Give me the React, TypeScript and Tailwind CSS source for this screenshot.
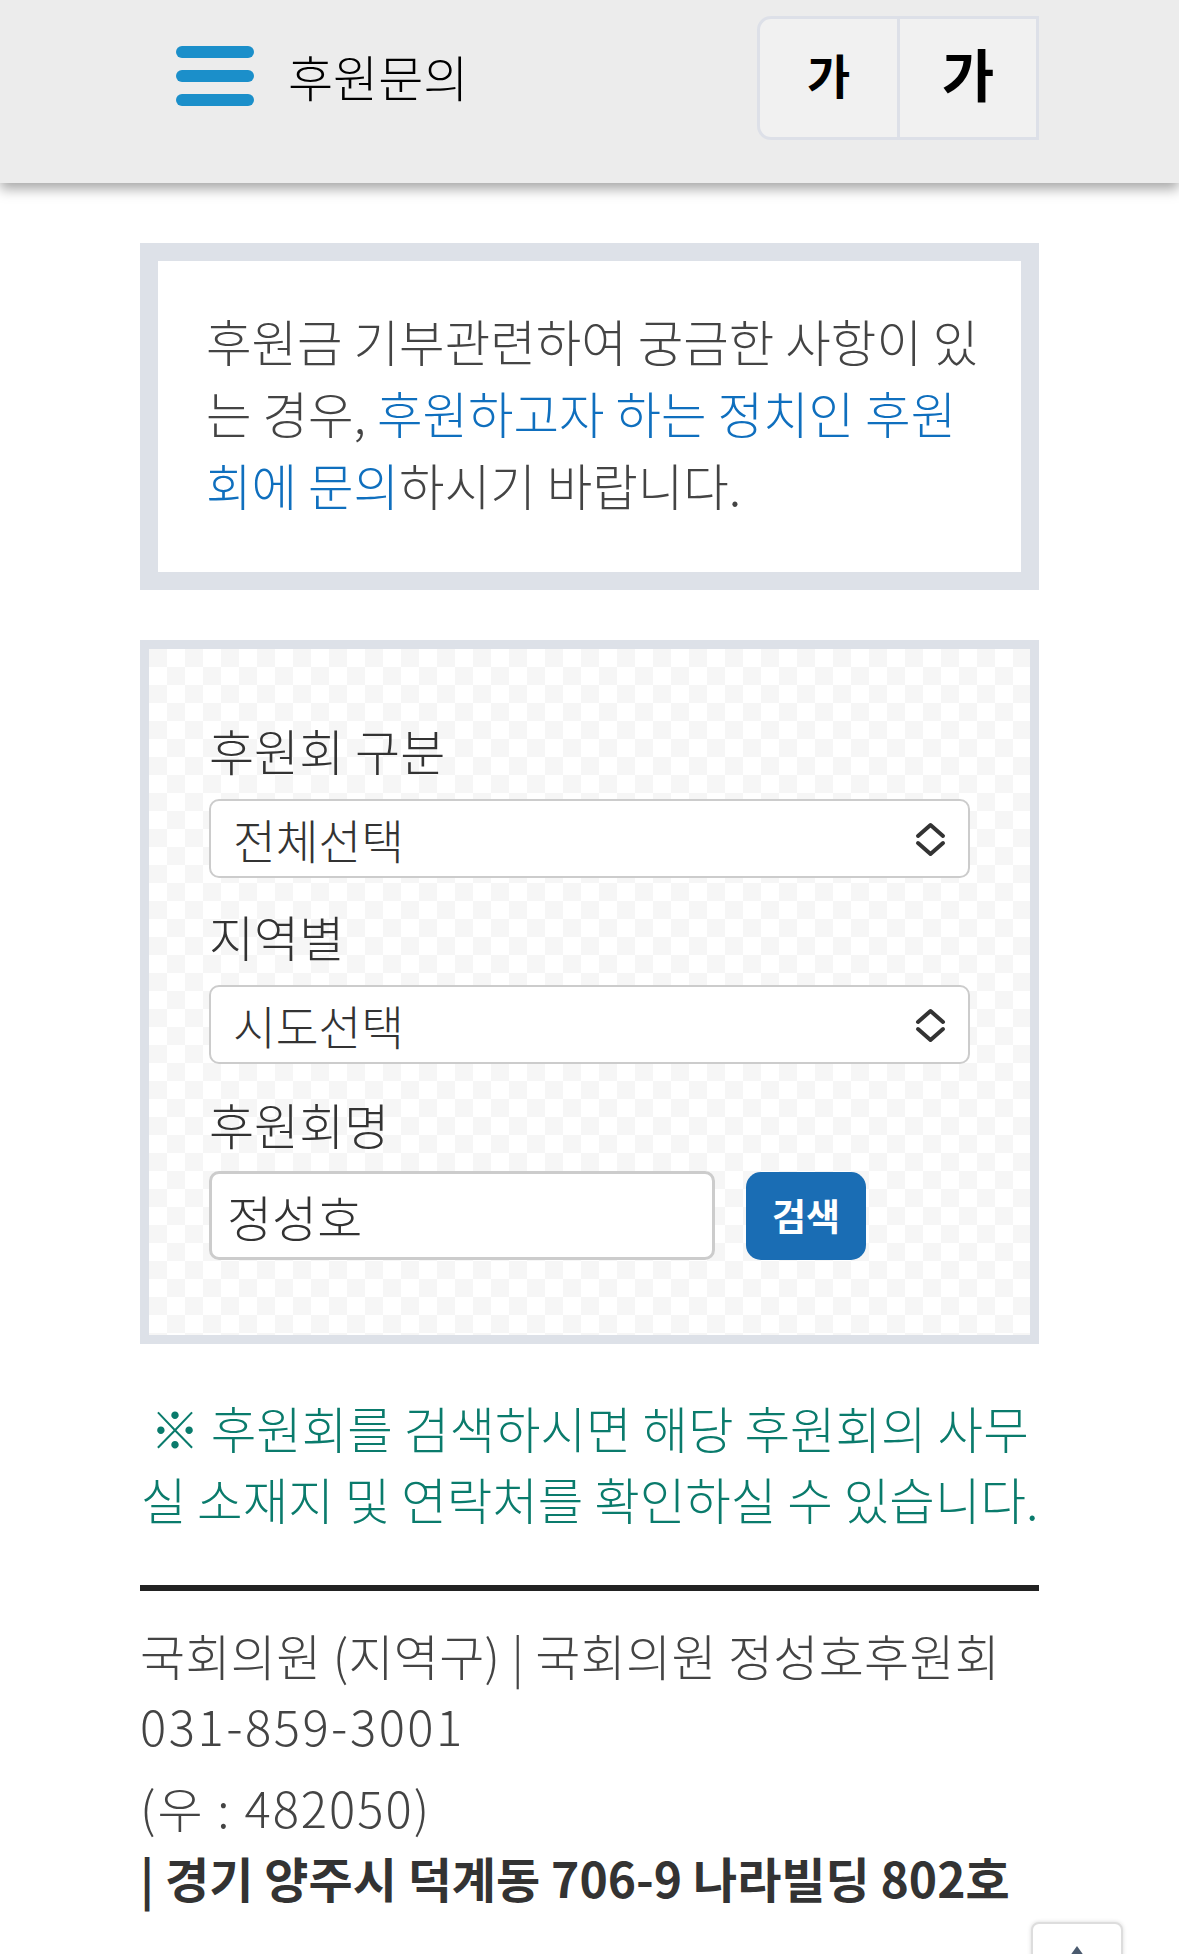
import React from "react";

export default function App() {
  return (
    <div className="min-h-[1954px] bg-white font-['Noto_Sans_CJK_KR','Noto_Sans',sans-serif] text-[#444]">
      {/* Header */}
      <header className="h-[183px] bg-[#ececec] shadow-[0_6px_12px_rgba(0,0,0,0.35)] relative z-10">
        <div className="mx-[140px] h-full flex items-start">
          <div className="flex items-center h-[151px] pl-[36px]">
            <div className="flex flex-col gap-[12px] w-[78px]">
              <span className="block h-[12px] rounded-full bg-[#1b8fca]" />
              <span className="block h-[12px] rounded-full bg-[#1b8fca]" />
              <span className="block h-[12px] rounded-full bg-[#1b8fca]" />
            </div>
            <span className="ml-[34px] text-[49px] font-light text-black leading-none">후원문의</span>
          </div>
          <div className="ml-auto mt-[16px] flex h-[124px] border-[3px] border-[#dde0e8] rounded-l-[14px] bg-[#f1f1f1] overflow-hidden">
            <div className="w-[137px] flex items-center justify-center pb-[8px] text-[47px] font-bold text-black">가</div>
            <div className="w-[139px] border-l-[3px] border-[#dde0e8] flex items-center justify-center pb-[10px] text-[57px] font-bold text-black">가</div>
          </div>
        </div>
      </header>

      <main className="mx-[140px]">
        {/* Info box */}
        <div className="mt-[60px] border-[18px] border-[#dde1e8] bg-white pl-[48px] pt-[44px] pb-[51px]">
          <p className="text-[49.5px] leading-[72px] font-light text-[#444] whitespace-nowrap">
            후원금 기부관련하여 궁금한 사항이 있<br />는 경우, <span className="text-[#0f6fbe]">후원하고자 하는 정치인 후원</span>
            <br />
            <span className="text-[#0f6fbe]">회에 문의</span>하시기 바랍니다.
          </p>
        </div>

        {/* Search box */}
        <div className="mt-[50px] border-[9px] border-[#dde1e8] bg-[conic-gradient(#ffffff_25%,#f6f6f6_0_50%,#ffffff_0_75%,#f6f6f6_0)] bg-[length:36px_36px] pl-[60px] pr-[60px] pt-[70px] pb-[75px]">
          <div className="h-[62px] leading-[62px] text-[49px] font-light text-[#333]">후원회 구분</div>
          <div className="mt-[18px] h-[79px] bg-white border-2 border-[#cccccc] rounded-[10px] flex items-center pl-[22px] pr-[22px]">
            <span className="text-[46.5px] font-light text-[#333]">전체선택</span>
            <Chevrons />
          </div>

          <div className="mt-[27px] h-[62px] leading-[62px] text-[49px] font-light text-[#333]">지역별</div>
          <div className="mt-[18px] h-[79px] bg-white border-2 border-[#cccccc] rounded-[10px] flex items-center pl-[22px] pr-[22px]">
            <span className="text-[46.5px] font-light text-[#333]">시도선택</span>
            <Chevrons />
          </div>

          <div className="mt-[29px] h-[62px] leading-[62px] text-[49px] font-light text-[#333]">후원회명</div>
          <div className="mt-[16px] flex items-start">
            <div className="w-[506px] h-[89px] bg-white border-[3px] border-[#cccccc] rounded-[10px] flex items-center pl-[15px]">
              <span className="text-[49px] font-light text-[#333]">정성호</span>
            </div>
            <button className="ml-[31px] mt-px w-[120px] h-[88px] rounded-[15px] bg-[#1a6db4] text-white text-[37px] font-bold flex items-center justify-center">
              검색
            </button>
          </div>
        </div>

        {/* Note */}
        <p className="mt-[48px] text-center text-[49.5px] leading-[71px] font-light text-[#0a7b6c] whitespace-nowrap">
          ※ 후원회를 검색하시면 해당 후원회의 사무
          <br />
          실 소재지 및 연락처를 확인하실 수 있습니다.
        </p>

        <div className="mt-[51px] h-[6px] bg-[#222]" />

        {/* Footer */}
        <div className="text-[#444]">
          <div className="mt-[27px] h-[74px] leading-[74px] text-[49px] font-light tracking-[0.3px] whitespace-nowrap">
            국회의원 (지역구) | 국회의원 정성호후원회
          </div>
          <div className="mt-[-4px] h-[74px] leading-[74px] text-[49px] font-light tracking-[2.5px]">031-859-3001</div>
          <div className="mt-[8px] h-[74px] leading-[74px] text-[49px] font-light tracking-[2px]">(우 : 482050)</div>
          <div className="mt-[-4px] h-[74px] leading-[74px] text-[48px] font-bold text-[#333] whitespace-nowrap">
            | 경기 양주시 덕계동 706-9 나라빌딩 802호
          </div>
        </div>
      </main>

      {/* Scroll to top */}
      <div className="fixed left-[1031px] top-[1922px] w-[92px] h-[92px] bg-white border-2 border-[#dddddd] rounded-[8px] shadow-[0_0_4px_rgba(0,0,0,0.15)] flex justify-center">
        <svg width="24" height="20" viewBox="0 0 24 20" className="mt-[20px]">
          <path d="M12 2 L22 16 L2 16 Z" fill="#4a5a6e" />
        </svg>
      </div>
    </div>
  );
}

function Chevrons() {
  return (
    <svg width="31" height="36" viewBox="0 0 31 36" className="ml-auto" fill="none" stroke="#333" strokeWidth="4" strokeLinecap="round" strokeLinejoin="round">
      <path d="M3 15 L15.5 4 L28 15" />
      <path d="M3 22 L15.5 33 L28 22" />
    </svg>
  );
}
